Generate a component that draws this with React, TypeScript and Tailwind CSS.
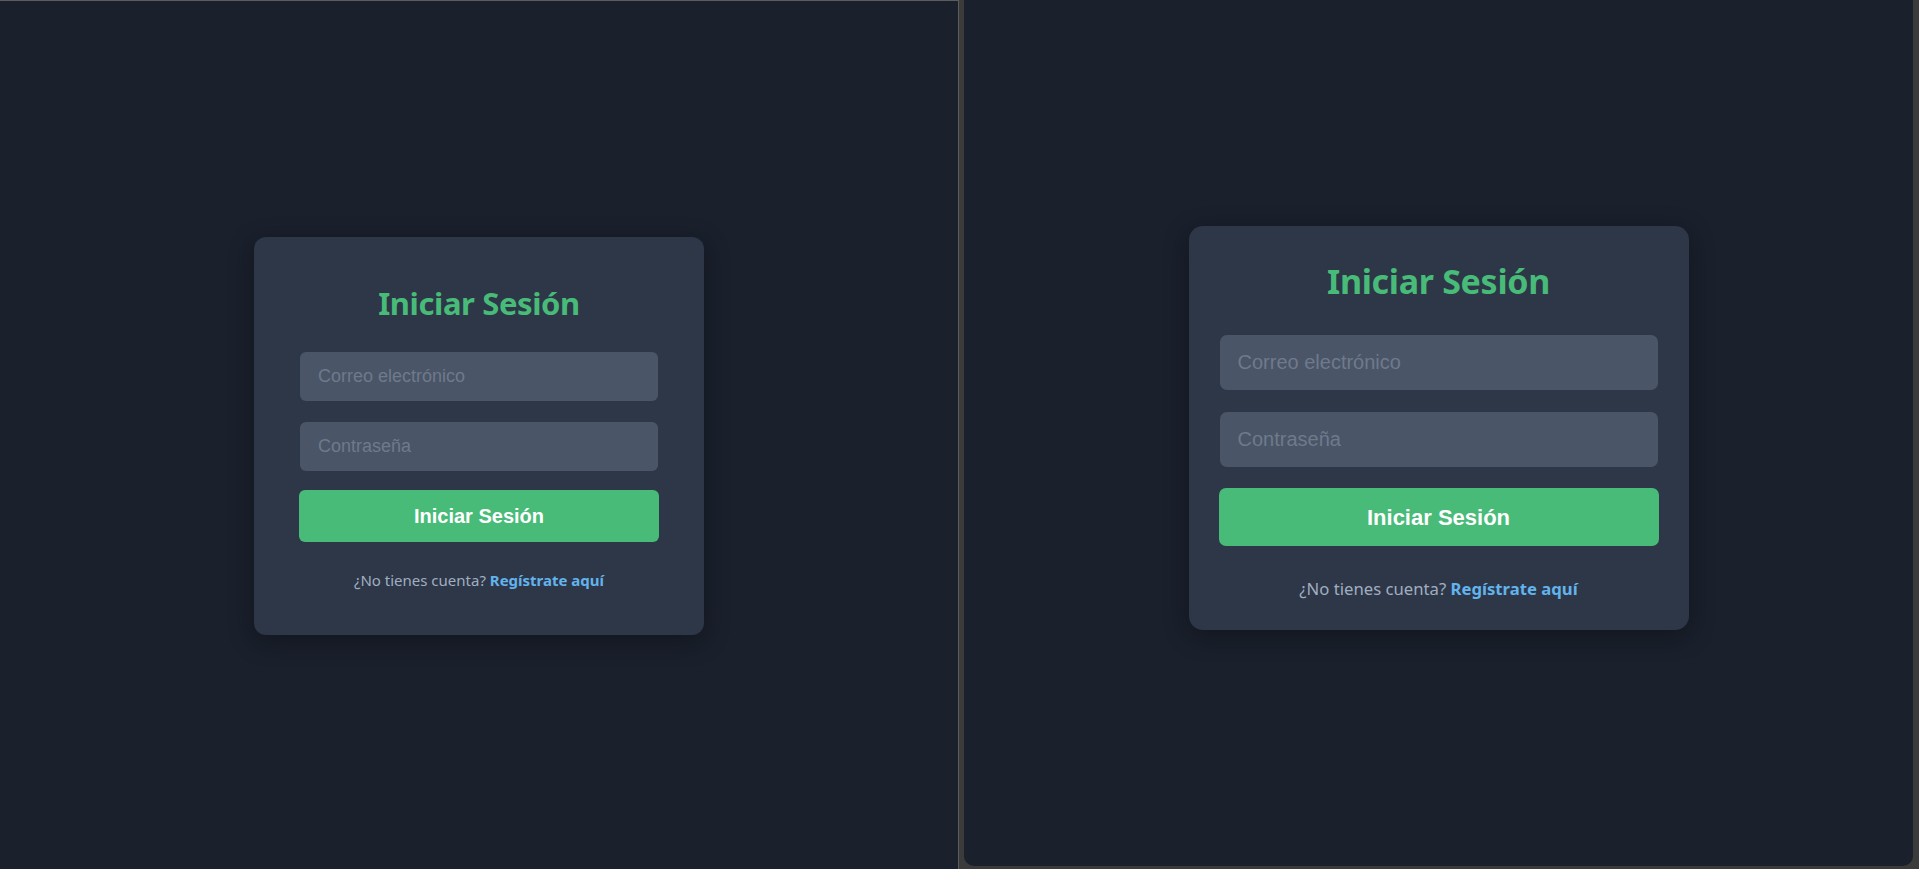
import React from "react"

type CardProps = {
  wide?: boolean
}

const LoginCard: React.FC<CardProps> = ({ wide }) => {
  if (wide) {
    return (
      <div className="w-[500px] rounded-[14px] bg-[#2d3748] px-[31px] pt-[33px] pb-[28px] shadow-[0_6px_24px_rgba(0,0,0,0.35)]">
        <h2 className="text-center font-['Noto_Sans',sans-serif] text-[34px] font-bold leading-[44px] tracking-[-0.3px] text-[#48bb78]">
          Iniciar Sesión
        </h2>
        <div className="mt-[32px] flex flex-col">
          <input
            type="email"
            placeholder="Correo electrónico"
            className="h-[55px] w-full rounded-[7px] bg-[#4a5568] px-[18px] font-['Liberation_Sans',Arial,sans-serif] text-[20px] text-white outline-none placeholder:text-[#6f7a8b]"
          />
          <input
            type="password"
            placeholder="Contraseña"
            className="mt-[22px] h-[55px] w-full rounded-[7px] bg-[#4a5568] px-[18px] font-['Liberation_Sans',Arial,sans-serif] text-[20px] text-white outline-none placeholder:text-[#6f7a8b]"
          />
          <button className="mt-[21px] -mx-px h-[58px] rounded-[7px] bg-[#48bb78] font-['Liberation_Sans',Arial,sans-serif] text-[22px] font-bold text-white">
            Iniciar Sesión
          </button>
        </div>
        <p className="mt-[30px] text-center font-['Noto_Sans',sans-serif] text-[16.7px] text-[#a0aec0]">
          ¿No tienes cuenta? <a className="font-bold text-[#63b3ed]">Regístrate aquí</a>
        </p>
      </div>
    )
  }

  return (
    <div className="w-[450px] rounded-[12px] bg-[#2d3748] px-[46px] pt-[46px] pb-[43px] shadow-[0_6px_24px_rgba(0,0,0,0.35)]">
      <h2 className="text-center font-['Noto_Sans',sans-serif] text-[31px] font-bold leading-[40px] tracking-[-0.4px] text-[#48bb78]">
        Iniciar Sesión
      </h2>
      <div className="mt-[29px] flex flex-col">
        <input
          type="email"
          placeholder="Correo electrónico"
          className="h-[49px] w-full rounded-[6px] bg-[#4a5568] px-[18px] font-['Liberation_Sans',Arial,sans-serif] text-[18px] text-white outline-none placeholder:text-[#6f7a8b]"
        />
        <input
          type="password"
          placeholder="Contraseña"
          className="mt-[21px] h-[49px] w-full rounded-[6px] bg-[#4a5568] px-[18px] font-['Liberation_Sans',Arial,sans-serif] text-[18px] text-white outline-none placeholder:text-[#6f7a8b]"
        />
        <button className="mt-[19px] -mx-px h-[52px] rounded-[6px] bg-[#48bb78] font-['Liberation_Sans',Arial,sans-serif] text-[20px] font-bold text-white">
          Iniciar Sesión
        </button>
      </div>
      <p className="mt-[27px] text-center font-['Noto_Sans',sans-serif] text-[15px] text-[#a0aec0]">
        ¿No tienes cuenta? <a className="font-bold text-[#63b3ed]">Regístrate aquí</a>
      </p>
    </div>
  )
}

export default function App() {
  return (
    <div className="flex h-[869px] w-[1919px] overflow-hidden bg-[#3b3b3b]">
      {/* left window */}
      <div className="flex h-full w-[959px] shrink-0 items-center justify-center border-t border-r border-[#5c5c5c] bg-[#1a202c] pt-[2px]">
        <LoginCard />
      </div>
      {/* right window */}
      <div className="ml-[5px] flex h-[866px] w-[949px] shrink-0 items-center justify-center rounded-b-[10px] bg-[#1a202c] pb-[10px]">
        <LoginCard wide />
      </div>
    </div>
  )
}
